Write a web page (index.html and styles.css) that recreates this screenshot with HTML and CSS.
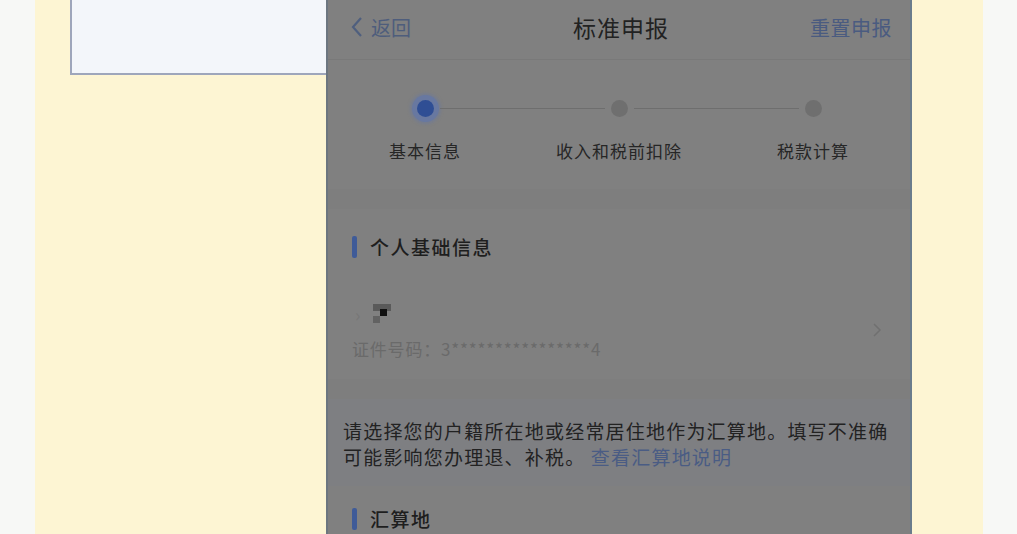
FILE: index.html
```html
<!DOCTYPE html>
<html>
<head>
<meta charset="utf-8">
<link rel="stylesheet" href="styles.css">
</head>
<body>
<div class="page">
  <div class="note-box"></div>
  <div class="phone">
    <div class="nav">
      <div class="nav-back">
        <svg width="14" height="22" viewBox="0 0 14 22"><path d="M11 2 L3 11 L11 20" fill="none" stroke="#4f5f7e" stroke-width="2.2"/></svg>
        <span>返回</span>
      </div>
      <div class="nav-title">标准申报</div>
      <div class="nav-reset">重置申报</div>
    </div>

    <div class="steps">
      <div class="step first active">
        <div class="track"><span class="seg"></span><span class="dot"></span><span class="seg"></span></div>
        <div class="step-label">基本信息</div>
      </div>
      <div class="step">
        <div class="track"><span class="seg"></span><span class="dot"></span><span class="seg"></span></div>
        <div class="step-label">收入和税前扣除</div>
      </div>
      <div class="step last">
        <div class="track"><span class="seg"></span><span class="dot"></span><span class="seg"></span></div>
        <div class="step-label">税款计算</div>
      </div>
    </div>

    <div class="band"></div>

    <div class="section">
      <div class="section-title">个人基础信息</div>
      <div class="person">
        <div class="person-info">
          <div class="person-name">
            <span class="tiny-arrow">›</span>
            <span class="mosaic"><i class="m1"></i><i class="m2"></i><i class="m3"></i></span>
          </div>
          <div class="person-id">证件号码：3****************4</div>
        </div>
        <svg class="chevron" width="10" height="16" viewBox="0 0 10 16"><path d="M2 2 L8 8 L2 14" fill="none" stroke="#707070" stroke-width="1.5"/></svg>
      </div>
    </div>

    <div class="band"></div>

    <div class="notice">
      请选择您的户籍所在地或经常居住地作为汇算地。填写不准确<br>
      可能影响您办理退、补税。 <span class="link">查看汇算地说明</span>
    </div>

    <div class="section">
      <div class="section-title">汇算地</div>
    </div>
  </div>
</div>
</body>
</html>
```

FILE: styles.css
```css
html, body {
  margin: 0;
  padding: 0;
  height: 100%;
  overflow: hidden;
}

body {
  background-color: #f7f8f6;
  font-family: "Noto Sans CJK SC", "Noto Sans", sans-serif;
}

.page {
  margin: 0 34px 0 35px;
  height: 534px;
  background-color: #fdf5d3;
  padding-left: 35px;
  display: flex;
  align-items: flex-start;
}

.note-box {
  width: 254px;
  height: 73px;
  background-color: #f3f6fa;
  border-left: 2px solid #9ea6bb;
  border-bottom: 2px solid #9ea6bb;
}

.phone {
  width: 582px;
  height: 534px;
  background-color: #808080;
  border-left: 2px solid #6c7680;
  border-right: 2px solid #6a7c8c;
  overflow: hidden;
}

/* nav bar */
.nav {
  height: 60px;
  box-sizing: border-box;
  padding: 0 18px 5px 22px;
  border-bottom: 1px solid #797979;
  display: grid;
  grid-template-columns: 1fr auto 1fr;
  align-items: center;
}

.nav-back {
  display: flex;
  align-items: center;
  gap: 7px;
  color: #4e5d7c;
  font-size: 20px;
}

.nav-title {
  color: #222;
  font-size: 23px;
  letter-spacing: 1px;
}

.nav-reset {
  justify-self: end;
  color: #4a5b80;
  font-size: 20px;
  letter-spacing: 0.5px;
}

/* steps */
.steps {
  height: 129px;
  display: grid;
  grid-template-columns: 1fr 1fr 1fr;
}

.step {
  display: flex;
  flex-direction: column;
  align-items: center;
}

.track {
  width: 100%;
  margin-top: 33px;
  height: 30px;
  display: flex;
  align-items: center;
}

.seg {
  flex: 1;
  height: 1px;
  background-color: #6e6e6e;
}

.step.first .seg:first-child,
.step.last .seg:last-child {
  background-color: transparent;
}

.dot {
  width: 17px;
  height: 17px;
  border-radius: 50%;
  background-color: #6f6f6f;
  margin: 0 6px;
}

.step.active .dot {
  background-color: #2f4e94;
  box-shadow: 0 0 0 5px #6878a0, 0 0 3px 7px rgba(104, 120, 160, 0.5);
}

.step-label {
  margin-top: 15px;
  color: #262626;
  font-size: 17px;
  letter-spacing: 1px;
}

.band {
  height: 20px;
  background-color: #7e7e7e;
}

/* sections */
.section {
  padding: 24px 24px 0 24px;
}

.section-title {
  display: flex;
  align-items: center;
  gap: 13px;
  color: #1e1e1e;
  font-size: 19px;
  font-weight: 500;
  letter-spacing: 1.5px;
  line-height: 28px;
}

.section-title::before {
  content: "";
  width: 5px;
  height: 22px;
  border-radius: 2px;
  background-color: #3f5b98;
}

.person {
  display: flex;
  align-items: center;
  justify-content: space-between;
  padding: 43px 0 19px 0;
}

.person-info {
  display: flex;
  flex-direction: column;
  gap: 14px;
}

.person-name {
  display: flex;
  align-items: center;
  gap: 13px;
  height: 20px;
}

.tiny-arrow {
  color: #777;
  font-size: 18px;
  line-height: 1;
  padding-left: 3px;
}

.mosaic {
  position: relative;
  width: 20px;
  height: 20px;
}

.mosaic i {
  position: absolute;
  display: block;
}

.m1 { left: 0; top: 0; width: 18px; height: 7px; background-color: #5a5a5a; }
.m2 { left: 7px; top: 5px; width: 7px; height: 7px; background-color: #111; }
.m3 { left: 0; top: 12px; width: 7px; height: 7px; background-color: #626262; }

.person-id {
  color: #6a6a6a;
  font-size: 17px;
  line-height: 22px;
  letter-spacing: 0.8px;
}

.chevron {
  margin-right: 4px;
  margin-top: -4px;
}

.notice {
  height: 87px;
  box-sizing: border-box;
  padding: 19px 10px 0 15px;
  background-color: #7e7f82;
  color: #222;
  font-size: 19px;
  letter-spacing: 1.2px;
  line-height: 26px;
}

.link {
  color: #4a5c84;
}

.notice + .section {
  padding-top: 19px;
}
```
